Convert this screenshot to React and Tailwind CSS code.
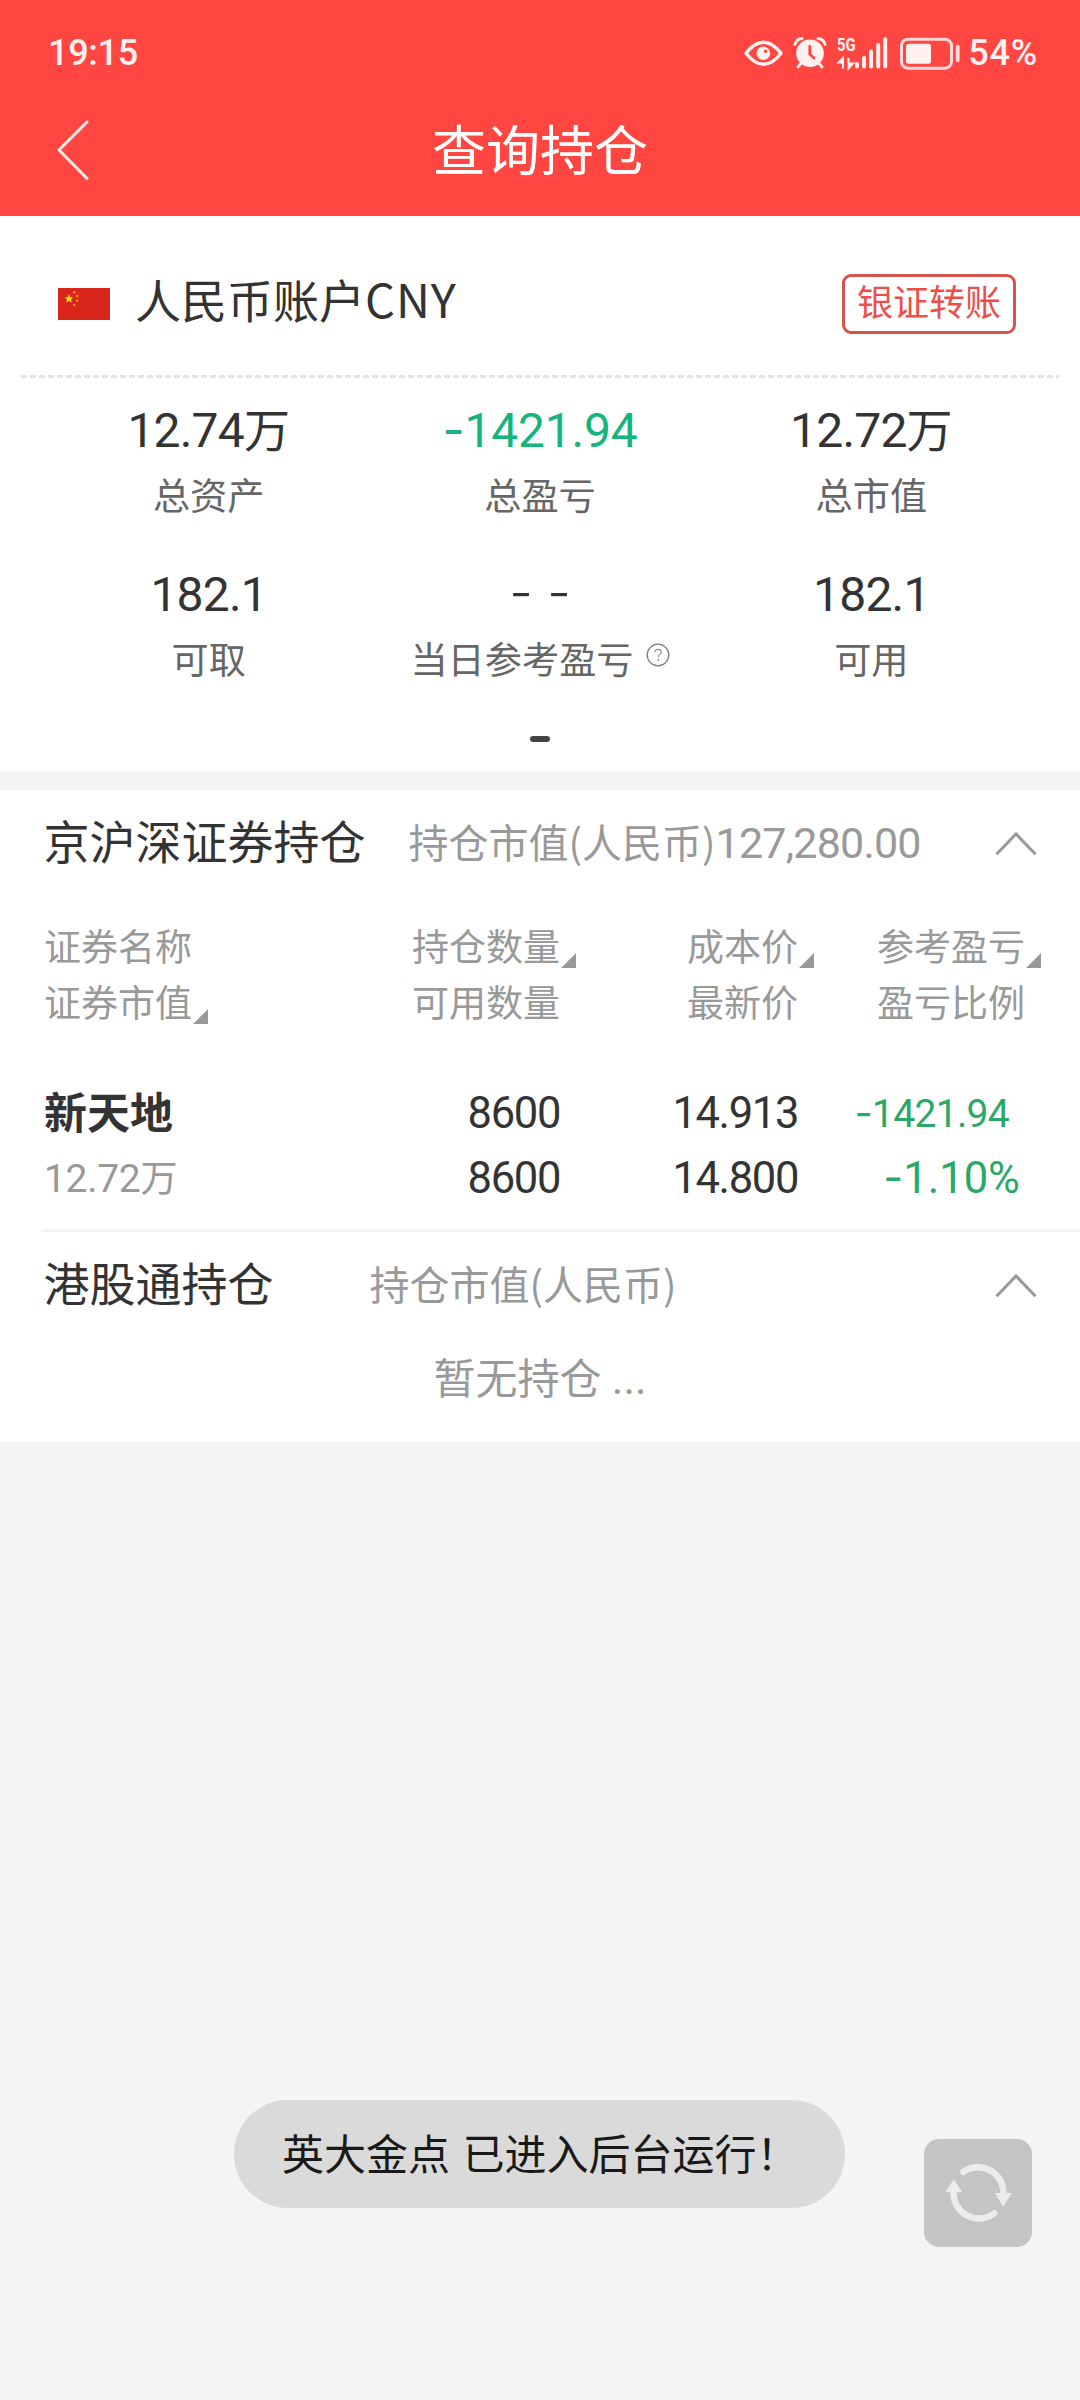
import React from 'react';

function StatusBar() {
  return (
    <div className="flex h-[105px] items-center pl-[48px] pr-[42px] text-[36px] font-medium leading-none text-[#fff1f0]">
      <span className="tracking-[-0.3px]">19:15</span>
      <svg className="ml-auto h-[36px] w-[216px] overflow-visible" viewBox="744 34 216 36">
        <path d="M746 52.3C752 44.5 757.500 41.300 763.500 41.300S775 44.500 781 52.300C775 60.100 769.500 63.300 763.500 63.300S752 60.100 746 52.300Z" fill="none" stroke="#fff1f0" strokeWidth="3.400" strokeLinejoin="round" />
        <circle cx="763.3" cy="52.3" r="6.800" fill="#fff1f0" />
        <circle cx="765.500" cy="50.300" r="1.700" fill="#ff4641" />
        <circle cx="810" cy="52.300" r="13.800" fill="#fff1f0" />
        <path d="M795 43.500Q796 38 802 37.500M825 43.500Q824 38 818 37.500M801 62.500L798 66M819 62.500L822 66" fill="none" stroke="#fff1f0" strokeWidth="2.800" strokeLinecap="round" />
        <path d="M809.800 45.500V53.200L814 57" fill="none" stroke="#ff4641" strokeWidth="2.800" strokeLinecap="round" strokeLinejoin="round" />
        <text x="837" y="50.300" fontSize="19" fontWeight="700" textLength="18.500" lengthAdjust="spacingAndGlyphs" fill="#fff1f0">5G</text>
        <path d="M843 67.500V57L838.500 61.500H843M848.500 57V67.500L853 62.500H848.500" fill="#fff1f0" stroke="#fff1f0" strokeWidth="2" />
        <path d="M857 63V65.500M864 57V65.500M871 50.500V65.500M878.200 44V65.500M885.200 38.200V65.500" stroke="#fff1f0" strokeWidth="4" strokeLinecap="round" />
        <rect x="901.500" y="38.200" width="50" height="29" rx="6.500" fill="none" stroke="#ffdad8" strokeWidth="3" />
        <rect x="906" y="42.700" width="25" height="20" rx="2.500" fill="#fff1f0" />
        <rect x="955.800" y="43.700" width="3.800" height="17.500" rx="1.700" fill="#ffdad8" />
      </svg>
      <span className="ml-[8px] tracking-[0.8px]">54%</span>
    </div>
  );
}

function Flag() {
  const small = [[16.2, 4.3], [19.2, 8], [19.2, 12.8], [16.2, 17]];
  return (
    <svg className="h-[32px] w-[52px]" viewBox="0 0 52 32">
      <rect width="52" height="32" fill="#da251c" />
      <path d="M11 6.200L12.200 9.300L15.300 9.400L12.900 11.400L13.800 14.600L11 12.800L8.200 14.600L9.100 11.400L6.700 9.400L9.800 9.300Z" fill="#ffe600" />
      {small.map(([x, y]) => <circle key={y} cx={x} cy={y} r="1.300" fill="#f29a1c" />)}
    </svg>
  );
}

function Stat({ label, children, green, help }) {
  return (
    <div className="flex h-[164px] flex-col items-center whitespace-nowrap">
      <div className={green ? 'h-[64px] text-[46px] leading-[64px] text-[#14b47a]' : 'h-[64px] text-[46px] leading-[64px] text-[#333333]'}>{children}</div>
      <div className="flex pt-[1px] text-[37.2px] leading-[66px] text-[#666666]">
        {label}
        {help && (
          <svg className="ml-[12px] mt-[15px] h-[24px] w-[24px]" viewBox="0 0 24 24">
            <circle cx="12" cy="12" r="10.800" fill="none" stroke="#7b7b7b" strokeWidth="1.300" />
            <path d="M8.800 9.300C9 7.300 10.300 6.400 12 6.400C13.900 6.400 15.200 7.500 15.200 9.200C15.200 11.500 12.200 11.800 12.200 14.300" fill="none" stroke="#8d8d8d" strokeWidth="1.100" />
            <circle cx="12.200" cy="17" r="0.900" fill="#8d8d8d" />
          </svg>
        )}
      </div>
    </div>
  );
}

const Big = ({ children }) => <span className="text-[48px] leading-none tracking-[-0.8px]">{children}</span>;
const Dash = ({ children }) => <span className="font-['Inter'] leading-none">{children}</span>;
const Cjk = ({ children }) => <span className="font-['Noto_Sans_CJK_SC'] leading-none">{children}</span>;

function SectionHead({ title, gap, children }) {
  return (
    <div className="flex h-[106px] items-center whitespace-nowrap pl-[43.5px] pr-[43px] leading-[60px]">
      <h2 className="text-[46px] text-[#333333]">{title}</h2>
      <div className={gap + ' mt-[4px] h-[60px] text-[40px] text-[#999999]'}>{children}</div>
      <svg className="ml-auto mt-[2px] h-[26px] w-[42px]" viewBox="0 0 42 26">
        <path d="M1.500 23.300L21 3L40.500 23.300" fill="none" stroke="#999999" strokeWidth="3" />
      </svg>
    </div>
  );
}

function Sortable({ children }) {
  return (
    <div className="relative inline-block">
      {children}
      <svg className="absolute bottom-[9px] left-full ml-[1px] h-[15px] w-[15px]" viewBox="0 0 15 15">
        <path d="M15 0V15H0Z" fill="#999999" />
      </svg>
    </div>
  );
}

const COLS = 'grid grid-cols-[366px_150px_238px_227px] whitespace-nowrap pl-[44px]';

export default function App() {
  return (
    <div className="relative min-h-[2400px] w-[1080px] bg-[#f4f4f4] font-['Roboto','Noto_Sans_CJK_SC',sans-serif]">
      <header className="h-[216px] bg-[#ff4641]">
        <StatusBar />
        <div className="grid h-[94px] grid-cols-[1fr_auto_1fr] items-center">
          <svg className="ml-[54px] mt-[-4px] h-[64px] w-[40px]" viewBox="0 0 40 64">
            <path d="M33 4L5 32L33 60.500" fill="none" stroke="#ffecea" strokeWidth="3" strokeLinecap="round" strokeLinejoin="round" />
          </svg>
          <h1 className="mt-[2px] text-[54px] leading-[80px] text-white">查询持仓</h1>
        </div>
      </header>

      <section className="h-[555px] bg-white">
        <div className="flex h-[159px] items-center pl-[58px] pr-[64px] pt-[17px]">
          <Flag />
          <span className="mb-[4px] ml-[25px] h-[60px] text-[46px] leading-[60px] text-[#333333]">人民币账户<span className="font-['Noto_Sans_CJK_SC'] text-[47px] leading-none tracking-[0.9px]">CNY</span></span>
          <button className="ml-auto h-[60px] w-[174px] rounded-[9px] border-[3px] border-[#d65450] text-[36px] leading-[52px] text-[#ec4f4a]">银证转账</button>
        </div>
        <div className="mx-[21px] h-[3px] bg-[repeating-linear-gradient(90deg,#e4e4e4_0px,#e4e4e4_6px,transparent_6px,transparent_9px)]" />
        <div className="grid grid-cols-3 px-[43px] pt-[21px]">
          <Stat label="总资产"><Big>12.74</Big>万</Stat>
          <Stat label="总盈亏" green><span className="text-[48px] leading-none tracking-[-0.2px]"><Dash>-</Dash>1421.94</span></Stat>
          <Stat label="总市值"><Big>12.72</Big>万</Stat>
          <Stat label="可取"><Big>182.1</Big></Stat>
          <Stat label="当日参考盈亏" help><span className="text-[52px] font-light leading-none"><Dash>- -</Dash></span></Stat>
          <Stat label="可用"><Big>182.1</Big></Stat>
        </div>
        <div className="mx-auto mt-[9px] h-[6px] w-[20px] rounded-full bg-[#444444]" />
      </section>

      <main className="mt-[19px] h-[652px] bg-white">
        <SectionHead title="京沪深证券持仓" gap="ml-[43px]">
          持仓市值<Cjk>(人民币)</Cjk><span className="text-[43px] leading-none tracking-[-0.8px]">127,280.00</span>
        </SectionHead>
        <div className={COLS + ' h-[137px] pt-[25px] text-right text-[37px] leading-[56px] text-[#999999]'}>
          <div className="text-left">证券名称<br /><Sortable>证券市值</Sortable></div>
          <div><Sortable>持仓数量</Sortable><br />可用数量</div>
          <div><Sortable>成本价</Sortable><br />最新价</div>
          <div><Sortable>参考盈亏</Sortable><br />盈亏比例</div>
        </div>
        <div className={COLS + ' h-[196px] pt-[48px] text-right text-[43.5px] leading-[65px] tracking-[-1.35px] text-[#333333]'}>
          <div className="text-left tracking-normal">
            <div className="h-[65px] pt-[1px] text-[43px] font-bold leading-[65px]">新天地</div>
            <div className="h-[65px] pt-[1px] text-[37px] leading-[65px] text-[#999999]"><span className="text-[39px] leading-none tracking-[-0.3px]">12.72</span>万</div>
          </div>
          <div>8600<br />8600</div>
          <div>14.913<br />14.800</div>
          <div className="text-[#2aa868]">
            <div className="h-[65px] pr-[16px] pt-[1px] text-[39px] leading-[65px] tracking-[-0.7px]"><Dash>-</Dash>1421.94</div>
            <div className="h-[65px] pr-[5px] tracking-normal"><Dash>-</Dash>1.10%</div>
          </div>
        </div>
        <div className="ml-[43px] h-[3px] bg-[#f4f4f4]" />
        <SectionHead title="港股通持仓" gap="ml-[96px]">
          持仓市值<Cjk>(人民币)</Cjk>
        </SectionHead>
        <div className="text-center text-[42px] leading-[83px] text-[#999999]">暂无持仓 <span className="text-[44px] leading-none">...</span></div>
      </main>

      <div className="absolute left-[234px] top-[2100px] h-[108px] w-[611px] whitespace-nowrap rounded-[54px] bg-[#dadada] pl-[48px] text-[42px] leading-[111px] text-[#191919] [word-spacing:2px]">英大金点 已进入后台运行！</div>

      <button className="absolute left-[924px] top-[2139px] h-[108px] w-[108px] rounded-[15px] bg-[#c4c4c4]">
        <svg className="h-[108px] w-[108px]" viewBox="0 0 108 108">
          <path d="M39.300 33A25.300 25.300 0 0 1 79.300 55M70 74.500A25.300 25.300 0 0 1 29.700 52" fill="none" stroke="#ececec" strokeWidth="6.500" strokeLinecap="round" />
          <path d="M70.700 54H87.700L79.300 67.700ZM21.500 53.300H38.200L29.800 40.200Z" fill="#ececec" />
        </svg>
      </button>
    </div>
  );
}
